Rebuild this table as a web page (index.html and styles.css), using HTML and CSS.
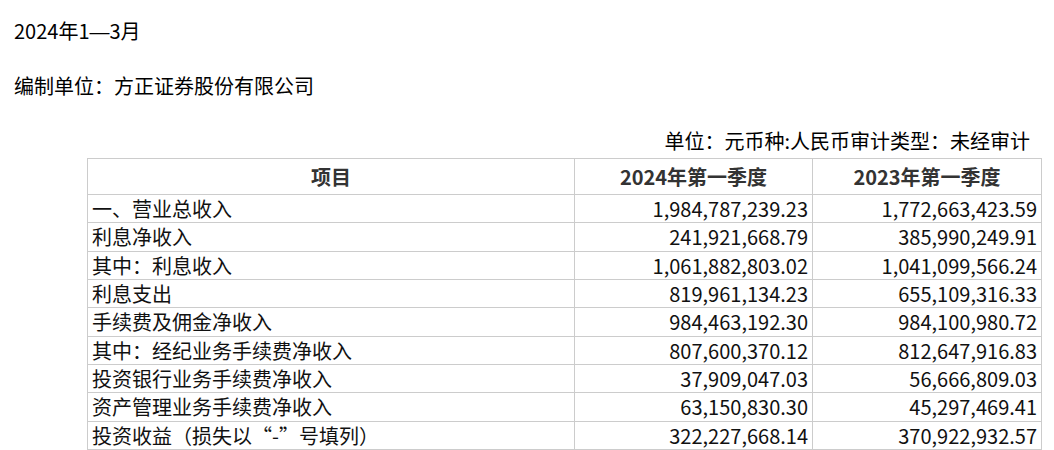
FILE: index.html
```html
<!DOCTYPE html>
<html lang="zh-CN">
<head>
<meta charset="utf-8">
<link rel="stylesheet" href="styles.css">
</head>
<body>
<div class="page">
  <p class="title">2024年1<span class="dash">—</span>3月</p>
  <p class="org">编制单位：方正证券股份有限公司</p>
  <div class="unit">单位：元币种:人民币审计类型：未经审计</div>
  <table class="report">
    <thead>
      <tr><th class="c1">项目</th><th class="c2">2024年第一季度</th><th class="c3">2023年第一季度</th></tr>
    </thead>
    <tbody>
      <tr><td>一、营业总收入</td><td class="num">1,984,787,239.23</td><td class="num">1,772,663,423.59</td></tr>
      <tr><td>利息净收入</td><td class="num">241,921,668.79</td><td class="num">385,990,249.91</td></tr>
      <tr><td>其中：利息收入</td><td class="num">1,061,882,803.02</td><td class="num">1,041,099,566.24</td></tr>
      <tr><td>利息支出</td><td class="num">819,961,134.23</td><td class="num">655,109,316.33</td></tr>
      <tr><td>手续费及佣金净收入</td><td class="num">984,463,192.30</td><td class="num">984,100,980.72</td></tr>
      <tr><td>其中：经纪业务手续费净收入</td><td class="num">807,600,370.12</td><td class="num">812,647,916.83</td></tr>
      <tr><td>投资银行业务手续费净收入</td><td class="num">37,909,047.03</td><td class="num">56,666,809.03</td></tr>
      <tr><td>资产管理业务手续费净收入</td><td class="num">63,150,830.30</td><td class="num">45,297,469.41</td></tr>
      <tr><td>投资收益（损失以“-”号填列）</td><td class="num">322,227,668.14</td><td class="num">370,922,932.57</td></tr>
    </tbody>
  </table>
</div>
</body>
</html>
```
FILE: styles.css
```css
html, body {
  margin: 0;
  padding: 0;
  background: #fff;
}
body {
  font-family: "Noto Sans CJK SC", "Noto Sans", sans-serif;
  font-size: 20px;
  color: #000;
}
.page {
  padding: 16px 0 0 14px;
}
.title {
  margin: 0 0 24px;
  line-height: 30px;
}
.dash {
  font-family: "Liberation Sans", sans-serif;
}
.org {
  margin: 0 0 25px;
  line-height: 30px;
}
.unit {
  text-align: right;
  line-height: 30px;
  padding-right: 24px;
}
.report {
  margin: 2px 0 0 73px;
  width: 954px;
  border-collapse: collapse;
  table-layout: fixed;
}
.report th, .report td {
  box-sizing: border-box;
  border: 1px solid #cccccc;
  padding: 0 4px;
  white-space: nowrap;
  overflow: hidden;
}
.report th {
  font-weight: bold;
  color: #333;
  line-height: 35px;
  text-align: center;
}
.report td {
  line-height: 27.33px;
  color: #111;
}
.report td.num {
  text-align: right;
}
.c1 { width: 487px; }
.c2 { width: 238px; }
.c3 { width: 229px; }
```
